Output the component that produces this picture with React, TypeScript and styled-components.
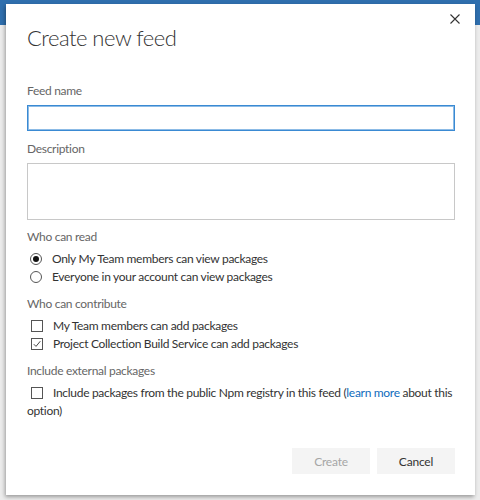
import React from "react";
import styled, { createGlobalStyle } from "styled-components";

const Global = createGlobalStyle`
  html, body { margin: 0; padding: 0; }
  body { font-family: Lato, "Liberation Sans", sans-serif; background: #e6e6e6; }
  * { box-sizing: border-box; }
`;

const Page = styled.div`
  position: relative;
  width: 480px;
  height: 500px;
  overflow: hidden;
  background: linear-gradient(to bottom, #2f6fae 0, #2f6fae 25px, #ececec 25px, #ececec 100%);
  padding: 4px 5px 5px 6px;
  display: flex;
`;

const Dialog = styled.div`
  flex: 1;
  background: #fff;
  box-shadow: -1px 2px 4px rgba(0, 0, 0, 0.35);
  padding: 10px 20px 21px 21px;
  display: flex;
  flex-direction: column;
  letter-spacing: -0.3px;
`;

const Header = styled.div`
  display: flex;
  justify-content: space-between;
  align-items: flex-start;
`;

const Title = styled.h1`
  margin: 8px 0 0 0;
  font-family: Lato, "Liberation Sans", sans-serif;
  font-weight: 300;
  font-size: 22px;
  letter-spacing: -0.5px;
  line-height: 32px;
  color: #333;
`;

const CloseButton = styled.button`
  border: 0;
  background: transparent;
  padding: 0;
  width: 10px;
  height: 10px;
  margin-right: -5px;
  display: flex;
  cursor: pointer;
`;

const Label = styled.div<{ $top: number }>`
  margin-top: ${(p) => p.$top}px;
  font-size: 12px;
  line-height: 18px;
  color: #666;
`;

const Input = styled.input`
  margin-top: 5px;
  width: 100%;
  height: 26px;
  border: 1px solid #3a8ad3;
  box-shadow: inset 0 0 0 1px #8cbbe6;
  outline: none;
  padding: 0 6px;
  font: inherit;
`;

const TextArea = styled.textarea`
  margin-top: 5px;
  width: 100%;
  height: 57px;
  border: 1px solid #c8c8c8;
  resize: none;
  outline: none;
  padding: 4px 6px;
  font: inherit;
  display: block;
`;

const Options = styled.div`
  margin-top: 4px;
  display: flex;
  flex-direction: column;
`;

const Option = styled.div`
  font-size: 12px;
  line-height: 18px;
  color: #333;
`;

const Radio = styled.span<{ $checked?: boolean }>`
  display: inline-block;
  vertical-align: -2px;
  width: 12px;
  height: 12px;
  border-radius: 50%;
  border: 1px solid #555;
  margin: 0 10px 0 3px;
  position: relative;
  &::after {
    content: "";
    display: ${(p) => (p.$checked ? "block" : "none")};
    position: absolute;
    left: 2px;
    top: 2px;
    width: 6px;
    height: 6px;
    border-radius: 50%;
    background: #111;
  }
`;

const Check = styled.span`
  display: inline-block;
  vertical-align: -2px;
  width: 12px;
  height: 12px;
  border: 1px solid #555;
  margin: 0 10px 0 4px;
  position: relative;
  svg { position: absolute; left: 1px; top: 1px; }
`;

const Link = styled.a`
  color: #0f6cbd;
  text-decoration: none;
`;

const Footer = styled.div`
  margin-top: auto;
  display: flex;
  justify-content: flex-end;
  gap: 7px;
`;

const Button = styled.button<{ $disabled?: boolean }>`
  width: 78px;
  height: 26px;
  border: 0;
  background: #f4f4f4;
  color: ${(p) => (p.$disabled ? "#a6a6a6" : "#333")};
  font-family: inherit;
  font-size: 12px;
  letter-spacing: -0.2px;
  cursor: ${(p) => (p.$disabled ? "default" : "pointer")};
`;

export default function App() {
  return (
    <>
      <Global />
      <Page>
        <Dialog>
          <Header>
            <Title>Create new feed</Title>
            <CloseButton aria-label="Close">
              <svg width="10" height="10" viewBox="0 0 10 10">
                <path d="M0.5 0.5 L9.5 9.5 M9.5 0.5 L0.5 9.5" stroke="#333" strokeWidth="1.1" />
              </svg>
            </CloseButton>
          </Header>
          <Label $top={28}>Feed name</Label>
          <Input />
          <Label $top={9}>Description</Label>
          <TextArea />
          <Label $top={8}>Who can read</Label>
          <Options>
            <Option><Radio $checked />Only My Team members can view packages</Option>
            <Option><Radio />Everyone in your account can view packages</Option>
          </Options>
          <Label $top={9}>Who can contribute</Label>
          <Options>
            <Option><Check />My Team members can add packages</Option>
            <Option>
              <Check>
                <svg width="8" height="8" viewBox="0 0 8 8">
                  <path d="M0.8 4.2 L3 6.4 L7.3 1.2" stroke="#444" strokeWidth="1" fill="none" />
                </svg>
              </Check>
              Project Collection Build Service can add packages
            </Option>
          </Options>
          <Label $top={9}>Include external packages</Label>
          <Options>
            <Option>
              <Check />Include packages from the public Npm registry in this feed (<Link href="#">learn more</Link> about this option)
            </Option>
          </Options>
          <Footer>
            <Button $disabled>Create</Button>
            <Button>Cancel</Button>
          </Footer>
        </Dialog>
      </Page>
    </>
  );
}
